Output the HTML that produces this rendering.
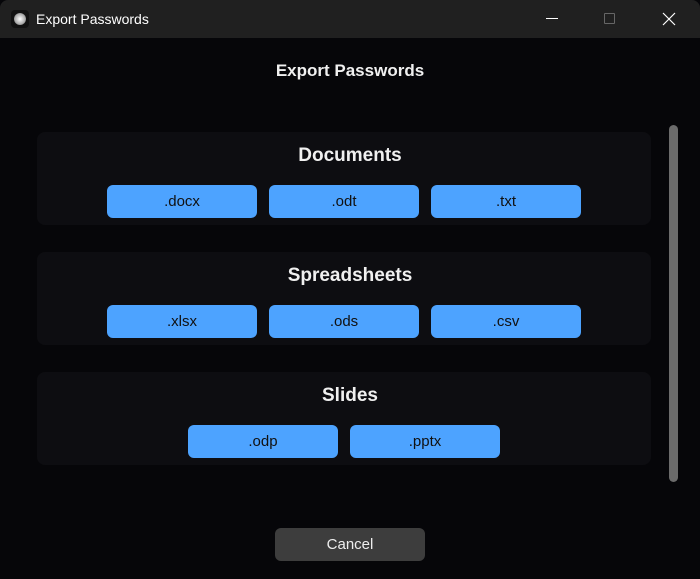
<!DOCTYPE html>
<html><head><style>
body{margin:0;width:700px;height:579px;background:#060609;font-family:"Liberation Sans",sans-serif;position:relative;overflow:hidden}
.tb{position:absolute;left:0;top:0;width:700px;height:38px;background:#202020;border-radius:8px 8px 0 0}
.tt{position:absolute;left:36px;top:11px;color:#fff;font-size:14px}
.ic{position:absolute;left:11px;top:10px;width:18px;height:18px;background:#111;border-radius:4px}
.ic:after{content:"";position:absolute;left:3px;top:3px;width:12px;height:12px;border-radius:50%;background:radial-gradient(#fff,#aaa 60%,#444)}
.h{position:absolute;left:0;width:700px;text-align:center;color:#f0f0f0;font-weight:bold}
.card{position:absolute;left:37px;width:614px;height:93px;background:#0d0d11;border-radius:8px}
.b{position:absolute;width:150px;height:33px;background:#4da3ff;border-radius:6px;color:#111;font-size:15px;text-align:center;line-height:33px}
.sb{position:absolute;left:669px;top:125px;width:9px;height:357px;background:#6b6b6b;border-radius:5px}
</style></head><body>
<div class="tb"><div class="ic"></div><div class="tt">Export Passwords</div>
<div style="position:absolute;left:546px;top:18px;width:12px;height:1px;background:#fff"></div>
<div style="position:absolute;left:604px;top:13px;width:9px;height:9px;border:1px solid #666;border-radius:1px"></div>
<svg style="position:absolute;left:662px;top:12px" width="14" height="14"><path d="M1 1L13 13M13 1L1 13" stroke="#fff" stroke-width="1.2"/></svg>
</div>
<div class="h" style="top:61px;font-size:17px">Export Passwords</div>
<div class="card" style="top:132px"></div>
<div class="card" style="top:252px"></div>
<div class="card" style="top:372px"></div>
<div class="h" style="top:145px;font-size:19px">Documents</div>
<div class="h" style="top:265px;font-size:19px">Spreadsheets</div>
<div class="h" style="top:385px;font-size:19px">Slides</div>
<div class="b" style="left:107px;top:185px">.docx</div>
<div class="b" style="left:269px;top:185px">.odt</div>
<div class="b" style="left:431px;top:185px">.txt</div>
<div class="b" style="left:107px;top:305px">.xlsx</div>
<div class="b" style="left:269px;top:305px">.ods</div>
<div class="b" style="left:431px;top:305px">.csv</div>
<div class="b" style="left:188px;top:425px">.odp</div>
<div class="b" style="left:350px;top:425px">.pptx</div>
<div class="sb"></div>
<div class="b" style="left:275px;top:528px;background:#3d3d3d;color:#eee">Cancel</div>
</body></html>
